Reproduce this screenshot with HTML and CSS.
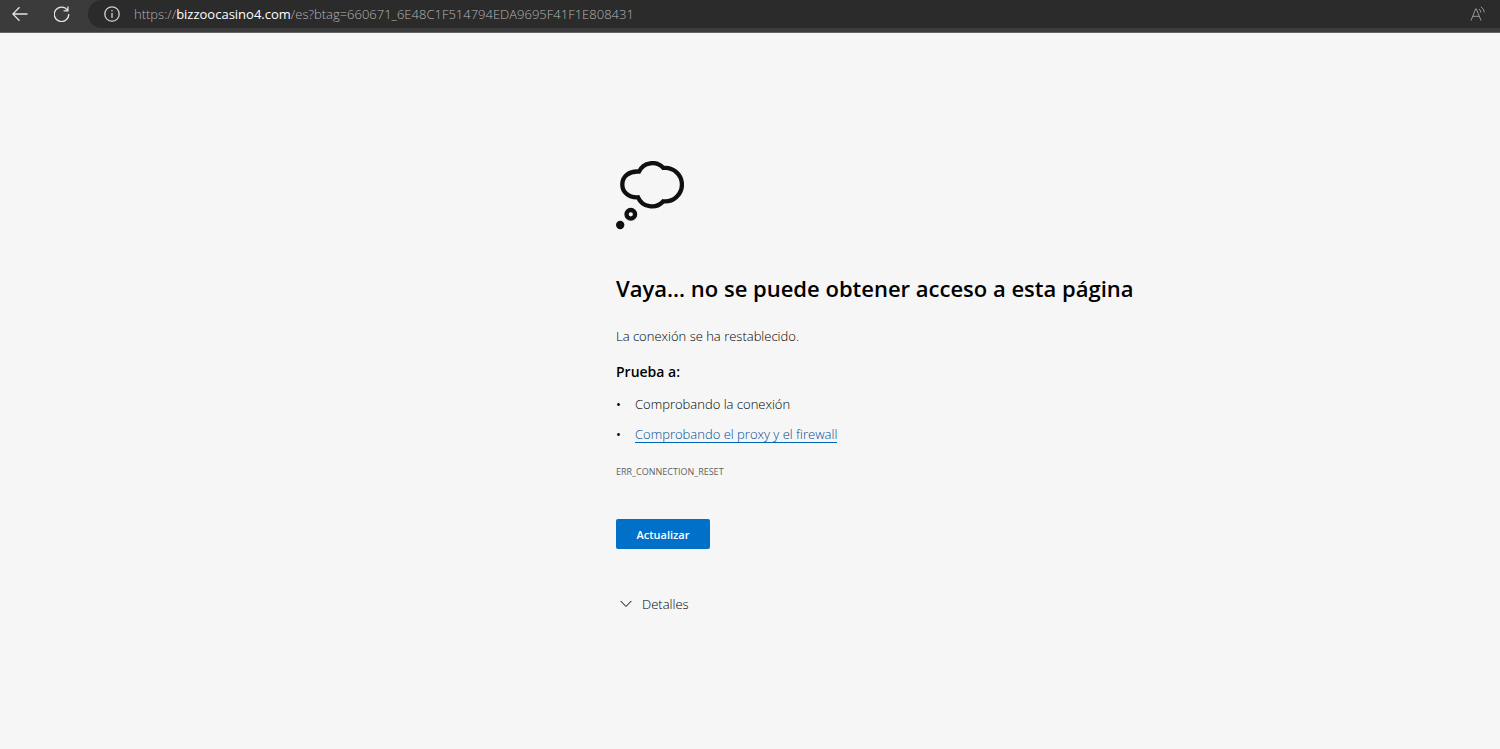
FILE: index.html
```html
<!DOCTYPE html>
<html lang="es">
<head>
    <meta charset="UTF-8">
    <meta name="viewport" content="width=device-width, initial-scale=1.0">
    <title>bizzoocasino4.com</title>
    <link rel="stylesheet" href="styles.css">
</head>
<body>
    <header class="toolbar">
        <button class="nav-btn" type="button" aria-label="Atrás">
            <svg width="16" height="16" viewBox="0 0 16 16"><path d="M15.5 8H1M7.5 1.2L.8 8l6.7 6.8"/></svg>
        </button>
        <button class="nav-btn" type="button" aria-label="Actualizar página">
            <svg width="16" height="16" viewBox="0 0 16 16"><path d="M13.6 4.5A7.2 7.2 0 1 0 14.7 8M13.9 .5v4.3h-4.3"/></svg>
        </button>
        <div class="address-bar">
            <button class="info-btn" type="button" aria-label="Ver información del sitio">
                <svg width="16" height="16" viewBox="0 0 16 16"><circle cx="8" cy="8" r="7.2"/><path d="M8 7v5M8 4v1.5"/></svg>
            </button>
            <div class="url">https://<span class="domain">bizzoocasino4.com</span>/es?btag=660671_6E48C1F514794EDA9695F41F1E808431</div>
            <button class="read-btn" type="button" aria-label="Leer en voz alta">
                <svg width="16" height="16" viewBox="0 0 16 16"><path d="M1 14.5L5.7 2.8h.6L11 14.5M2.8 10.3h6.4M9 3q1.7 1 1.8 3.5M10.8 .8q3.2 1.8 3.5 5.5"/></svg>
            </button>
        </div>
    </header>

    <main class="error-page">
        <svg class="cloud" width="68" height="69" viewBox="0 0 68 69" aria-hidden="true">
            <path d="M23 10.6A14.8 14.8 0 0 1 47.3 6.9A16.8 16.8 0 1 1 47.3 40.3A15.2 15.2 0 0 1 22 36.3C12.5 36.8 6.3 31 6.3 23.4C6.3 15.5 13 9.8 23 10.6Z"/>
            <circle cx="14.8" cy="53.3" r="4.3"/>
            <circle class="dot" cx="4.2" cy="64" r="4.2"/>
        </svg>
        <h1>Vaya... no se puede obtener acceso a esta página</h1>
        <p class="summary">La conexión se ha restablecido.</p>
        <h2>Prueba a:</h2>
        <ul class="suggestions">
            <li>Comprobando la conexión</li>
            <li><a href="#">Comprobando el proxy y el firewall</a></li>
        </ul>
        <p class="error-code">ERR_CONNECTION_RESET</p>
        <button class="reload-btn" type="button">Actualizar</button>
        <button class="details-btn" type="button">
            <svg width="12" height="8" viewBox="0 0 12 8"><path d="M.7 1L6 6.5 11.3 1"/></svg>
            Detalles
        </button>
    </main>
</body>
</html>
```

FILE: styles.css
```css
body {
    margin: 0;
    background-color: #f6f6f6;
    color: #000;
    font-family: "Segoe UI", "Open Sans", "Noto Sans", sans-serif;
    font-size: 13px;
    font-weight: 300;
    line-height: 20px;
}
button {
    padding: 0;
    border: none;
    background: none;
    font-family: inherit;
    cursor: pointer;
}
svg {
    fill: none;
    stroke: currentColor;
}

/* browser toolbar */
.toolbar {
    display: flex;
    height: 32px;
    background-color: #3b3b3b;
    border-bottom: 1px solid #656565;
    color: #e4e4e4;
}
.nav-btn {
    display: flex;
    justify-content: center;
    align-items: center;
    width: 40px;
    height: 28px;
    margin-right: 2px;
    color: inherit;
}
.nav-btn svg,
.info-btn svg {
    stroke-width: 1.3;
}
.address-bar {
    flex: 1;
    display: flex;
    align-items: center;
    min-width: 0;
    height: 28px;
    margin-left: 4px;
    padding: 0 14px 0 16px;
    background-color: #2b2b2b;
    border-radius: 14px 0 0 14px;
}
.info-btn,
.read-btn {
    display: flex;
    color: #d0d0d0;
}
.read-btn {
    color: #9a9a9a;
}
.url {
    flex: 1;
    margin-left: 14px;
    overflow: hidden;
    white-space: nowrap;
    color: #b4b4b4;
}
.domain {
    color: #fff;
    font-weight: 400;
}

/* error page */
.error-page {
    display: flex;
    flex-direction: column;
    align-items: flex-start;
    padding: 128px 16px 40px calc(50% - 134px);
}
.cloud {
    color: #101010;
    stroke-width: 4.3;
}
.cloud .dot {
    fill: currentColor;
    stroke: none;
}
h1 {
    margin: 42px 0 0;
    font-size: 22px;
    font-weight: 600;
    line-height: 32px;
}
.summary {
    margin: 22px 0 0;
}
h2 {
    margin: 16px 0 0;
    font-size: 14px;
    font-weight: 600;
    line-height: 20px;
}
.suggestions {
    margin: 12px 0 0;
    padding: 0;
    list-style: none;
}
.suggestions li {
    display: flex;
    margin-bottom: 10px;
}
.suggestions li::before {
    content: "•";
    width: 19px;
    font-weight: 400;
}
.suggestions a {
    height: 18px;
    border-bottom: 1px solid #0067b8;
    color: #004a94;
    text-decoration: none;
}
.error-code {
    margin: 10px 0 0;
    color: #5f5f5f;
    font-size: 9px;
    font-weight: 400;
    line-height: 16px;
}
.reload-btn {
    min-width: 94px;
    height: 30px;
    margin-top: 39px;
    background-color: #0070c9;
    border-radius: 2px;
    color: #fff;
    font-size: 11px;
    font-weight: 600;
}
.details-btn {
    display: flex;
    align-items: center;
    gap: 10px;
    margin: 45px 0 0 4px;
    color: inherit;
    font-size: 13px;
    font-weight: 300;
    line-height: 20px;
}
```
